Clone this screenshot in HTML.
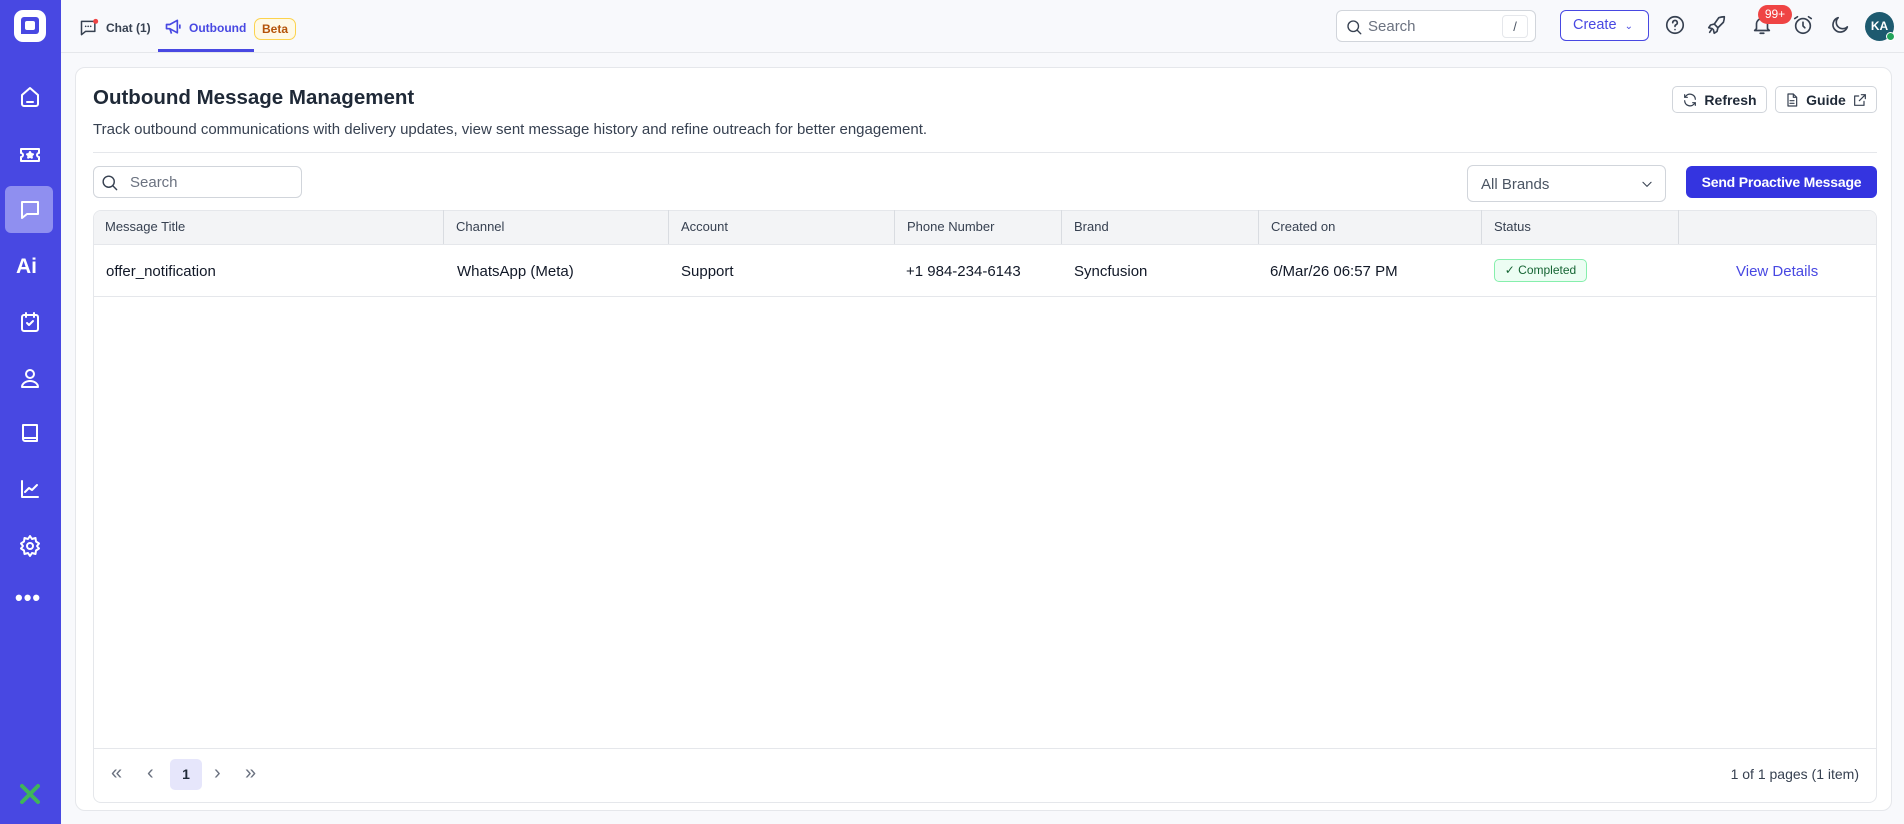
<!DOCTYPE html>
<html><head><meta charset="utf-8"><style>
*{box-sizing:border-box;margin:0;padding:0}
body{width:1904px;height:824px;overflow:hidden;background:#f8f9fc;font-family:"Liberation Sans",sans-serif;color:#1f2937;position:relative}
.abs{position:absolute}
.side{left:0;top:0;width:61px;height:824px;background:#4848e2}
.side svg{position:absolute;left:18px;width:24px;height:24px;fill:none;stroke:#fff;stroke-width:2;stroke-linecap:round;stroke-linejoin:round}
.top{left:61px;top:0;right:0;height:53px;border-bottom:1px solid #e5e7eb;background:#f8f9fc}
.card{left:75px;top:67px;width:1817px;height:744px;background:#fff;border:1px solid #e5e7eb;border-radius:10px}
.btn{border:1px solid #d1d5db;border-radius:5px;background:#fff;font-weight:bold;font-size:14px;color:#1f2937;display:flex;align-items:center;justify-content:center;gap:6px}
.th{top:210px;height:34px;font-size:13px;color:#374151;line-height:34px;padding-left:12px;border-left:1px solid #d9dce1}
.td{top:244px;height:52px;font-size:15px;line-height:52px;color:#111827}
.ico{fill:none;stroke:#374151;stroke-width:1.8;stroke-linecap:round;stroke-linejoin:round}
</style></head><body>
<div class="abs side">
 <div class="abs" style="left:14px;top:10px;width:32px;height:32px;background:#fff;border-radius:9px"></div>
 <div class="abs" style="left:21px;top:17px;width:18px;height:17px;background:#4848e2;border-radius:3px 3px 3px 0"></div>
 <div class="abs" style="left:25px;top:21px;width:10px;height:9px;background:#fff;border-radius:2px"></div>
 <svg style="top:85px" viewBox="0 0 24 24"><path d="M4 10l8-7 8 7v9a2 2 0 0 1-2 2H6a2 2 0 0 1-2-2z"/><path d="M9 17h6"/></svg>
 <svg style="top:143px" viewBox="0 0 24 24"><path d="M3 6h18v4a2 2 0 0 0 0 4v4H3v-4a2 2 0 0 0 0-4z"/><path d="M12 9l1 2 2 .3-1.5 1.4.4 2-1.9-1-1.9 1 .4-2L9 11.3l2-.3z" fill="#fff"/></svg>
 <div class="abs" style="left:5px;top:186px;width:48px;height:47px;background:#8f8ff0;border-radius:6px"></div>
 <svg style="top:198px" viewBox="0 0 24 24"><path d="M4 4h16v12H9l-5 4z"/></svg>
 <div class="abs" style="left:16px;top:255px;color:#fff;font-weight:bold;font-size:21px">Ai</div>
 <svg style="top:310px" viewBox="0 0 24 24"><rect x="4" y="5" width="16" height="16" rx="2"/><path d="M8 3v4M16 3v4M9 13l2 2 4-4"/></svg>
 <svg style="top:366px" viewBox="0 0 24 24"><circle cx="12" cy="8" r="4"/><path d="M4 21a8 6 0 0 1 16 0z"/></svg>
 <svg style="top:421px" viewBox="0 0 24 24"><path d="M5 4h14v16H7a2 2 0 0 1-2-2zM5 17h14"/></svg>
 <svg style="top:477px" viewBox="0 0 24 24"><path d="M4 4v16h16M7 15l4-4 3 2 5-5"/></svg>
 <svg style="top:534px" viewBox="0 0 24 24"><circle cx="12" cy="12" r="3"/><path d="M12 2l2 3 3.5-1 .5 3.5 3 2-2 2.5 2 2.5-3 2-.5 3.5-3.5-1-2 3-2-3-3.5 1-.5-3.5-3-2 2-2.5-2-2.5 3-2 .5-3.5 3.5 1z"/></svg>
 <div class="abs" style="left:15px;top:585px;color:#fff;font-weight:bold;font-size:22px;letter-spacing:1px">•••</div>
 <svg style="top:782px;stroke:#3fb45a;stroke-width:4" viewBox="0 0 24 24"><path d="M4 4l16 16M20 4L4 20"/></svg>
</div>
<div class="abs top">
 <svg class="abs" style="left:18px;top:18px" width="20" height="20" viewBox="0 0 24 24"><path class="ico" d="M3 4h16v12H8l-5 4z"/><circle cx="8" cy="10" r="1" fill="#374151"/><circle cx="11" cy="10" r="1" fill="#374151"/><circle cx="14" cy="10" r="1" fill="#374151"/><circle cx="20" cy="4" r="3" fill="#ef4444"/></svg>
 <div class="abs" style="left:45px;top:21px;font-size:12px;font-weight:bold;color:#374151">Chat (1)</div>
 <svg class="abs" style="left:103px;top:17px" width="20" height="20" viewBox="0 0 24 24"><path d="M3 9h4l9-5v15l-9-5H3zM7 14l2 6M19 9v5" fill="none" stroke="#4848e2" stroke-width="2" stroke-linejoin="round"/></svg>
 <div class="abs" style="left:128px;top:21px;font-size:12px;font-weight:bold;color:#4848e2">Outbound</div>
 <div class="abs" style="left:193px;top:18px;width:42px;height:22px;border:1px solid #fcd34d;background:#fef9e7;border-radius:7px;font-size:12px;font-weight:bold;color:#b45309;text-align:center;line-height:20px">Beta</div>
 <div class="abs" style="left:97px;top:49px;width:96px;height:3px;background:#4848e2"></div>
 <div class="abs" style="left:1275px;top:10px;width:200px;height:32px;border:1px solid #d1d5db;border-radius:6px;background:#fff">
  <svg class="abs" style="left:8px;top:7px" width="18" height="18" viewBox="0 0 24 24"><circle class="ico" cx="11" cy="11" r="7"/><path class="ico" d="M16 16l5 5"/></svg>
  <div class="abs" style="left:31px;top:7px;font-size:15px;color:#6b7280">Search</div>
  <div class="abs" style="left:165px;top:4px;width:26px;height:23px;border:1px solid #e5e7eb;border-radius:4px;font-size:13px;text-align:center;line-height:22px;color:#4b5563">/</div>
 </div>
 <div class="abs" style="left:1499px;top:10px;width:89px;height:31px;border:1px solid #4848e2;border-radius:6px;background:#fff;color:#4848e2;font-size:14.5px;line-height:29px;padding-left:12px">Create <span style="font-size:10px;margin-left:4px">⌄</span></div>
 <svg class="abs" style="left:1603px;top:14px" width="22" height="22" viewBox="0 0 24 24"><circle class="ico" cx="12" cy="12" r="9"/><path class="ico" d="M9.5 9.5a2.5 2.5 0 1 1 3.5 2.3c-.7.3-1 .9-1 1.7M12 17h.01"/></svg>
 <svg class="abs" style="left:1645px;top:14px" width="22" height="22" viewBox="0 0 24 24"><path class="ico" d="M14 4c3-1 6-1 6-1s0 3-1 6l-6 6-4-4zM9 11l-4 1-2 3 4 1M13 15l-1 4-3 2-1-4M6 17l-2 3"/></svg>
 <svg class="abs" style="left:1690px;top:14px" width="22" height="22" viewBox="0 0 24 24"><path class="ico" d="M6 16V11a6 6 0 0 1 12 0v5l2 2H4zM10 21h4"/></svg>
 <div class="abs" style="left:1697px;top:5px;width:34px;height:19px;background:#ef4444;border-radius:10px;color:#fff;font-size:12px;text-align:center;line-height:19px">99+</div>
 <svg class="abs" style="left:1731px;top:14px" width="22" height="22" viewBox="0 0 24 24"><circle class="ico" cx="12" cy="13" r="8"/><path class="ico" d="M12 9v4l2 2M3 5l3-2M21 5l-3-2"/></svg>
 <svg class="abs" style="left:1768px;top:14px" width="22" height="22" viewBox="0 0 24 24"><path class="ico" d="M20 14A8 8 0 1 1 10 4a7 7 0 0 0 10 10z"/></svg>
 <div class="abs" style="left:1804px;top:12px;width:29px;height:29px;border-radius:50%;background:#1d5a6f;color:#fff;font-size:12px;font-weight:bold;text-align:center;line-height:29px">KA</div>
 <div class="abs" style="left:1825px;top:32px;width:9px;height:9px;border-radius:50%;background:#22a35a;border:1px solid #fff"></div>
</div>
<div class="abs card"></div>
<div class="abs" style="left:93px;top:86px;font-size:20.5px;font-weight:bold;color:#1f2937">Outbound Message Management</div>
<div class="abs" style="left:93px;top:121px;font-size:15px;color:#374151">Track outbound communications with delivery updates, view sent message history and refine outreach for better engagement.</div>
<div class="abs btn" style="left:1672px;top:86px;width:95px;height:27px"><svg width="16" height="16" viewBox="0 0 24 24"><path class="ico" d="M20 11a8 8 0 0 0-14-5L4 8M4 4v4h4M4 13a8 8 0 0 0 14 5l2-2M20 20v-4h-4" stroke-width="2.2"/></svg>Refresh</div>
<div class="abs btn" style="left:1775px;top:86px;width:102px;height:27px"><svg width="16" height="16" viewBox="0 0 24 24"><path class="ico" d="M6 3h8l5 5v13H6zM14 3v5h5M9 13h6M9 17h6"/></svg>Guide<svg width="16" height="16" viewBox="0 0 24 24"><path class="ico" d="M14 4h6v6M20 4l-9 9M18 14v6H4V6h6"/></svg></div>
<div class="abs" style="left:93px;top:152px;width:1784px;height:1px;background:#e5e7eb"></div>
<div class="abs" style="left:93px;top:166px;width:209px;height:32px;border:1px solid #d1d5db;border-radius:6px;background:#fff">
 <svg class="abs" style="left:6px;top:6px" width="19" height="19" viewBox="0 0 24 24"><circle class="ico" cx="11" cy="11" r="7"/><path class="ico" d="M16 16l5 5"/></svg>
 <div class="abs" style="left:36px;top:7px;font-size:15px;color:#6b7280">Search</div>
</div>
<div class="abs" style="left:1467px;top:165px;width:199px;height:37px;border:1px solid #d1d5db;border-radius:6px;background:#fff">
 <div class="abs" style="left:13px;top:10px;font-size:15px;color:#4b5563">All Brands</div>
 <svg class="abs" style="left:172px;top:11px" width="14" height="14" viewBox="0 0 24 24"><path class="ico" d="M5 9l7 7 7-7" stroke-width="2.5"/></svg>
</div>
<div class="abs" style="left:1686px;top:166px;width:191px;height:32px;background:#3434e0;border-radius:6px;color:#fff;font-weight:bold;font-size:14px;text-align:center;line-height:32px;letter-spacing:-0.2px">Send Proactive Message</div>
<div class="abs" style="left:93px;top:210px;width:1784px;height:593px;border:1px solid #e5e7eb;border-radius:8px;overflow:hidden;background:#fff">
 <div class="abs" style="left:0;top:0;width:100%;height:34px;background:#f3f4f6;border-bottom:1px solid #e5e7eb"></div>
 <div class="abs" style="left:0;top:85px;width:100%;height:1px;background:#e5e7eb"></div>
 <div class="abs" style="left:0;top:537px;width:100%;height:1px;background:#e5e7eb"></div>
</div>
<div class="abs th" style="left:93px;border:none">Message Title</div>
<div class="abs th" style="left:443px">Channel</div>
<div class="abs th" style="left:668px">Account</div>
<div class="abs th" style="left:894px">Phone Number</div>
<div class="abs th" style="left:1061px">Brand</div>
<div class="abs th" style="left:1258px">Created on</div>
<div class="abs th" style="left:1481px">Status</div>
<div class="abs th" style="left:1678px;width:10px"></div>
<div class="abs td" style="left:106px;top:246px">offer_notification</div>
<div class="abs td" style="left:457px;top:246px">WhatsApp (Meta)</div>
<div class="abs td" style="left:681px;top:246px">Support</div>
<div class="abs td" style="left:906px;top:246px">+1 984-234-6143</div>
<div class="abs td" style="left:1074px;top:246px">Syncfusion</div>
<div class="abs td" style="left:1270px;top:246px">6/Mar/26 06:57 PM</div>
<div class="abs" style="left:1494px;top:259px;width:93px;height:23px;border:1px solid #86efac;background:#ecfdf3;border-radius:5px;font-size:12px;color:#166534;line-height:21px;text-align:center">✓ Completed</div>
<div class="abs td" style="left:1736px;top:246px;color:#4848e2">View Details</div>
<div class="abs" style="left:111px;top:762px;font-size:20px;color:#6b7280">«</div>
<div class="abs" style="left:147px;top:762px;font-size:20px;color:#6b7280">‹</div>
<div class="abs" style="left:170px;top:759px;width:32px;height:31px;background:#e6e6fb;border-radius:5px;font-size:14px;font-weight:bold;text-align:center;line-height:31px">1</div>
<div class="abs" style="left:214px;top:762px;font-size:20px;color:#6b7280">›</div>
<div class="abs" style="left:245px;top:762px;font-size:20px;color:#6b7280">»</div>
<div class="abs" style="left:1700px;top:766px;width:159px;text-align:right;font-size:14px;color:#374151">1 of 1 pages (1 item)</div>
</body></html>
